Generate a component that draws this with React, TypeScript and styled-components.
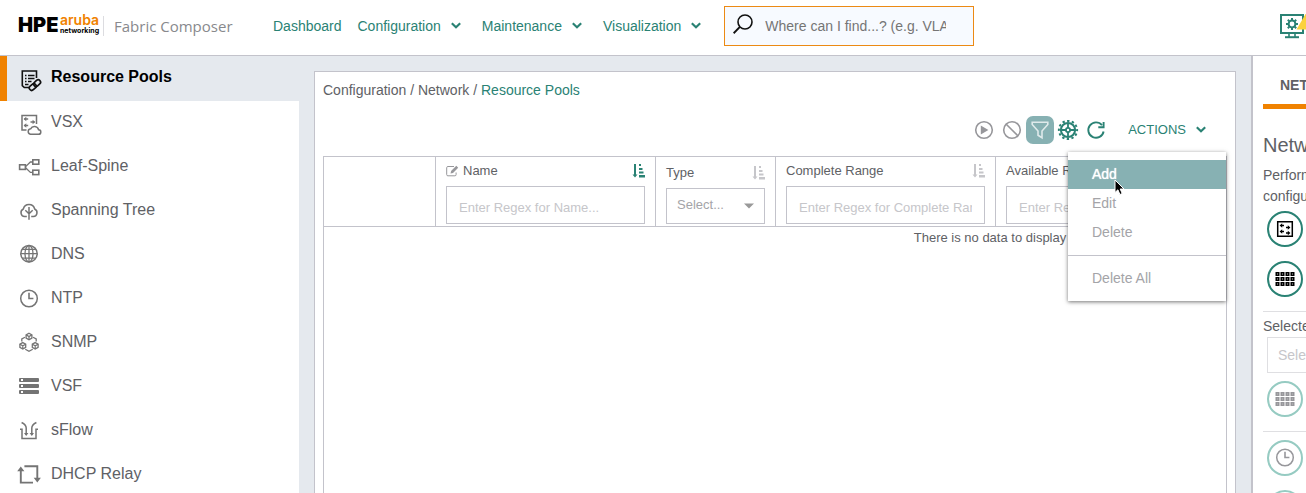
import React from "react";
import styled, { createGlobalStyle, css } from "styled-components";

const c = {
  teal: "#2a8274",
  tealFaded: "#96cbc2",
  sage: "#87b1b3",
  text: "#606165",
  muted: "#a4a4a8",
  faint: "#c6c6ca",
  line: "#c3c3cb",
  page: "#e5e9ee",
  orange: "#f08200",
};

const GlobalStyle = createGlobalStyle`
  *, *::before, *::after { box-sizing: border-box; }
  body {
    margin: 0;
    background: #fff;
    color: ${c.text};
    font-family: "Liberation Sans", Arial, sans-serif;
    font-size: 14px;
    line-height: 20px;
  }
  button, input, select { font: inherit; color: inherit; margin: 0; }
  svg { display: block; flex: none; }
`;

const Shell = styled.div`
  display: flex;
  flex-direction: column;
  height: 100vh;
  overflow: hidden;
`;

/* Header */

const TopBar = styled.header`
  display: flex;
  align-items: center;
  flex: none;
  height: 56px;
  padding: 0 0 4px 18px;
  border-bottom: 1px solid ${c.line};
  background: #fff;
  overflow: hidden;
`;

const Brand = styled.a`
  display: flex;
  align-items: center;
  width: 255px;
  flex: none;
  text-decoration: none;
`;

const BrandHpe = styled.span`
  width: 42px;
  padding-bottom: 2px;
  color: #000;
  font: 900 20px/20px Inter, sans-serif;
`;

const BrandStack = styled.span`
  display: flex;
  flex-direction: column;
  width: 43px;
  padding-bottom: 2px;
`;

const BrandAruba = styled.span`
  color: ${c.orange};
  font: 600 14px/12px Inter, sans-serif;
`;

const BrandNetworking = styled.span`
  color: #000;
  font: 700 7px/9px Inter, sans-serif;
`;

const BrandProduct = styled.span`
  padding-left: 10px;
  border-left: 1px solid #dcdce0;
  color: #88898d;
  font: 400 15px/20px "Open Sans", "Noto Sans", sans-serif;
  white-space: nowrap;
`;

const MainNav = styled.nav`
  display: flex;
  align-items: center;
  gap: 16px;
`;

const linkLook = css`
  border: 0;
  padding: 0;
  background: none;
  color: ${c.teal};
  text-decoration: none;
  cursor: pointer;
`;

const NavLink = styled.a`
  ${linkLook}
`;

const MenuButton = styled.button<{ $small?: boolean }>`
  ${linkLook}
  display: flex;
  align-items: center;
  gap: 9px;
  padding-right: 4px;
  font-size: ${(p) => (p.$small ? 13 : 14)}px;
`;

const Search = styled.label`
  display: flex;
  align-items: center;
  gap: 12px;
  width: 250px;
  height: 40px;
  margin-left: 18px;
  padding: 0 27px 0 8px;
  border: 1px solid #ec8a14;
  background: #f7faff;
`;

const SearchInput = styled.input`
  flex: 1;
  min-width: 0;
  border: 0;
  padding: 0;
  outline: 0;
  background: none;
  &::placeholder { color: #757575; opacity: 1; }
`;

const StatusButton = styled.button`
  ${linkLook}
  margin-left: auto;
  width: 27px;
  overflow: hidden;
`;

/* Page body */

const Body = styled.div`
  display: grid;
  grid-template-columns: 299px minmax(0, 1fr) 55px;
  flex: 1;
  min-height: 0;
`;

const SideNav = styled.nav`
  overflow: hidden;
  background: #fff;
`;

const SideLink = styled.a<{ $active?: boolean }>`
  display: flex;
  align-items: center;
  gap: 9px;
  height: ${(p) => (p.$active ? 45 : 44)}px;
  padding-left: ${(p) => (p.$active ? 9 : 16)}px;
  border-left: ${(p) => (p.$active ? `7px solid ${c.orange}` : "0")};
  background: ${(p) => (p.$active ? c.page : "#fff")};
  color: ${(p) => (p.$active ? "#000" : c.text)};
  font-size: 16px;
  font-weight: ${(p) => (p.$active ? 700 : 400)};
  text-decoration: none;

  svg { color: ${(p) => (p.$active ? "#111" : "#747474")}; }
`;

const SideLabel = styled.span`
  padding-bottom: 3px;
`;

const Content = styled.main`
  display: flex;
  padding: 15px 15px 0;
  background: ${c.page};
`;

const Panel = styled.section`
  display: flex;
  flex-direction: column;
  flex: 1;
  min-width: 0;
  padding: 8px 8px 0;
  border: 1px solid ${c.line};
  border-bottom: 0;
  background: #fff;
`;

const Crumbs = styled.div`
  color: ${c.text};
  white-space: pre;
`;

const CrumbLink = styled.a<{ $current?: boolean }>`
  color: ${(p) => (p.$current ? c.teal : "inherit")};
  text-decoration: none;
`;

const Toolbar = styled.div`
  display: flex;
  justify-content: flex-end;
  align-items: center;
  margin: 16px 0 12px;
  padding-right: 16px;
`;

const ToolButton = styled.button<{ $on?: boolean; $off?: boolean }>`
  display: flex;
  align-items: center;
  justify-content: center;
  width: 28px;
  height: 28px;
  padding: 0;
  border: 0;
  border-radius: 7px;
  background: ${(p) => (p.$on ? c.sage : "none")};
  color: ${(p) => (p.$on ? "#dfeaeb" : p.$off ? "#97979b" : c.teal)};
`;

const ActionsWrap = styled.div`
  position: relative;
  margin-left: 18px;
`;

const ActionMenu = styled.div`
  position: absolute;
  z-index: 2;
  top: 32px;
  right: -15px;
  width: 158px;
  padding: 8px 0;
  background: #fff;
  box-shadow: 0 1px 4px rgba(0, 0, 0, 0.55);
`;

const ActionItem = styled.button<{ $hover?: boolean }>`
  display: block;
  width: 100%;
  height: 29px;
  padding: 0 24px 2px;
  border: 0;
  background: ${(p) => (p.$hover ? c.sage : "none")};
  color: ${(p) => (p.$hover ? "#fff" : c.muted)};
  text-shadow: ${(p) => (p.$hover ? "0 0 1px #fff" : "none")};
  text-align: left;
`;

const ActionRule = styled.hr`
  margin: 8px 0;
  border: 0;
  border-top: 1px solid ${c.line};
`;

const Pointer = styled.svg`
  position: absolute;
  left: 46px;
  top: 27px;
`;

const TableFrame = styled.div`
  flex: 1;
  overflow: hidden;
  border: 1px solid ${c.line};
  border-bottom: 0;
`;

const Table = styled.table`
  width: 1332px;
  table-layout: fixed;
  border-collapse: separate;
  border-spacing: 0;
  font-size: 13px;
`;

const Head = styled.th<{ $w?: number }>`
  width: ${(p) => (p.$w ? `${p.$w}px` : "auto")};
  height: 70px;
  padding: 0 10px 2px;
  border-left: 1px solid ${c.line};
  border-bottom: 1px solid ${c.line};
  font-weight: 400;
  text-align: left;
  vertical-align: bottom;
  &:first-child { border-left: 0; }
`;

const HeadTitle = styled.div`
  display: flex;
  align-items: center;
  gap: 4px;
  margin-bottom: 5px;
  white-space: nowrap;
`;

const SortButton = styled.button<{ $on?: boolean }>`
  margin-left: auto;
  padding: 0;
  border: 0;
  background: none;
  color: ${(p) => (p.$on ? c.teal : c.faint)};
`;

const FilterInput = styled.input`
  display: block;
  width: 100%;
  height: 38px;
  padding: 4px 12px 0;
  border: 1px solid ${c.line};
  background: #fff;
  font-size: 13px;
  &::placeholder { color: ${c.faint}; opacity: 1; }
`;

const SelectBox = styled.div`
  display: grid;
  align-items: center;
  > * { grid-area: 1 / 1; }
  > svg { justify-self: end; margin-right: 11px; pointer-events: none; }
`;

const FilterSelect = styled.select`
  appearance: none;
  width: 100%;
  height: 36px;
  padding: 0 24px 2px 10px;
  border: 1px solid ${c.line};
  border-radius: 0;
  background: #fff;
  color: ${c.muted};
  font-size: 13px;
`;

const EmptyCell = styled.td`
  padding: 1px 0 0;
  text-align: center;
`;

/* Right side drawer */

const Drawer = styled.aside`
  overflow: hidden;
  padding-left: 10px;
  border-left: 2px solid ${c.line};
  background: #fff;
  white-space: nowrap;
`;

const DrawerTab = styled.button`
  display: block;
  width: 120px;
  padding: 19px 17px 9px;
  border: 0;
  border-bottom: 5px solid ${c.orange};
  background: none;
  font-weight: 700;
  text-align: left;
`;

const DrawerTitle = styled.h2`
  margin: 24px 0 8px;
  font-size: 20px;
  font-weight: 400;
  line-height: 24px;
`;

const DrawerText = styled.p`
  margin: 0 0 4px;
  line-height: 21px;
`;

const RoundStack = styled.div`
  display: flex;
  flex-direction: column;
  gap: 14px;
  padding: 0 0 14px 4px;
`;

const RoundButton = styled.button<{ $faded?: boolean }>`
  display: flex;
  align-items: center;
  justify-content: center;
  flex: none;
  width: 36px;
  height: 36px;
  padding: 0;
  border: 2px solid ${(p) => (p.$faded ? c.tealFaded : c.teal)};
  border-radius: 50%;
  background: #fff;
  color: ${(p) => (p.$faded ? "#97979b" : "#000")};
`;

const DrawerGroup = styled.div<{ $top: number }>`
  padding-top: ${(p) => p.$top}px;
  border-top: 1px solid #dfdfe2;
`;

const DrawerSelect = styled.select`
  appearance: none;
  display: block;
  width: 140px;
  height: 36px;
  margin: 1px 0 8px 4px;
  padding: 0 10px;
  border: 1px solid #dfdfe2;
  border-radius: 0;
  background: #fff;
  color: ${c.faint};
`;

/* Icons */

const Chevron = () => (
  <svg width="12" height="8" viewBox="0 0 12 8" fill="none" stroke="currentColor" strokeWidth="2.2">
    <path d="M1.8 1.3 6 5.2l4.2-3.9" />
  </svg>
);

const SideSvg = ({ children }: { children: React.ReactNode }) => (
  <svg width="26" height="26" viewBox="0 0 26 26" fill="none" stroke="currentColor" strokeWidth="1.3" aria-hidden="true">
    {children}
  </svg>
);

const ResourceIcon = () => (
  <SideSvg>
    <path d="M20.5 12V5H6.3v14.6l2 1.9H13" strokeWidth="1.6" />
    <path d="M9 9.5h1.500M9 12.500h1.500M9 15.500h1.500M12 9.500h6.500M12 12.500h6.500M12 15.500h3.500M9 18.500h3.500" strokeWidth="1.500" />
    <g transform="rotate(-42 19 19)" strokeWidth="1.700">
      <rect x="12.200" y="16.600" width="7.600" height="4.800" rx="2.400" />
      <rect x="18" y="16.600" width="7.600" height="4.800" rx="2.400" />
    </g>
  </SideSvg>
);

const VsxIcon = () => (
  <SideSvg>
    <path d="M20.500 14V5.600H6v14.500h4.500" strokeWidth="1.500" />
    <path d="M8.200 9h4M14.500 12h4M8.200 15.500h4" />
    <path d="m10.300 6.800-2.700 2.200 2.700 2.200zM16.600 9.800l2.700 2.200-2.700 2.200zM10.300 13.300l-2.700 2.200 2.700 2.200z" fill="currentColor" stroke="none" />
    <path d="M14.400 24.300h8a2.300 2.300 0 0 0 .2-4.600 4.300 4.300 0 0 0-8-.9 2.800 2.800 0 0 0-.2 5.500z" fill="#fff" strokeWidth="1.500" />
  </SideSvg>
);

const LeafIcon = () => (
  <SideSvg>
    <rect x="3.600" y="10.800" width="5.800" height="4.600" strokeWidth="1.600" />
    <rect x="16.800" y="5.800" width="6" height="4.400" strokeWidth="1.600" />
    <rect x="16.800" y="16.200" width="6" height="4.400" strokeWidth="1.600" />
    <path d="M16.800 8h-2.400L9.600 12.600M16.800 18.400h-2.400L9.600 13.800" />
  </SideSvg>
);

const TreeIcon = () => (
  <SideSvg>
    <path d="M10.800 18.600H8.600a4 4 0 0 1-1.300-7.600 5.900 5.900 0 0 1 11.400 0 4 4 0 0 1-1.300 7.600h-2.200" strokeWidth="1.500" />
    <path d="M13 9v12.800M9.300 12.200l3.700 3.600 3.700-3.600" strokeWidth="1.500" />
  </SideSvg>
);

const GlobeIcon = () => (
  <SideSvg>
    <circle cx="13" cy="11.700" r="8.200" strokeWidth="1.500" />
    <ellipse cx="13" cy="11.700" rx="4" ry="8.200" />
    <path d="M13 3.500v16.400M4.800 11.700h16.400M6 7.300h14M6 16.100h14" />
  </SideSvg>
);

const ClockIcon = () => (
  <SideSvg>
    <circle cx="13" cy="12.500" r="8.300" strokeWidth="1.500" />
    <path d="M13 6.800v5.700h4.400" strokeWidth="1.600" />
  </SideSvg>
);

const cube = (x: number, y: number) => (
  <g transform={`translate(${x} ${y})`} strokeWidth="1.300">
    <path d="M0-3.200 2.900-1.600v3.200L0 3.200l-2.900-1.600v-3.200z" />
    <path d="M-2.900-1.600 0 0l2.900-1.600M0 0v3.200" />
  </g>
);

const SnmpIcon = () => (
  <SideSvg>
    {cube(13, 6.5)}
    {cube(6.8, 15.8)}
    {cube(19.2, 15.8)}
    <path d="M9 7.200 5.800 9v2.400M17 7.200 20.200 9v2.400M9.300 19.200l3.700 2.100 3.700-2.100" />
  </SideSvg>
);

const VsfIcon = () => (
  <SideSvg>
    {[4, 10, 16].map((y) => (
      <g key={y} stroke="none">
        <rect x="3" y={y} width="20" height="4" rx="1" fill="currentColor" />
        <rect x="5" y={y + 1} width="2" height="2" fill="#fff" />
      </g>
    ))}
  </SideSvg>
);

const SflowIcon = () => (
  <SideSvg>
    <path d="M4 11.200h2v9.400h14v-9.400h2" strokeWidth="1.500" />
    <path d="M5.600 4.500c3.200 1.600 4.600 2.600 4.600 5.500v7M20.400 4.500c-3.200 1.600-4.600 2.600-4.600 5.500v7" strokeWidth="1.500" />
    <path d="M8 15h4.400l-2.200 3zM13.600 15H18l-2.200 3z" fill="currentColor" stroke="none" />
  </SideSvg>
);

const RelayIcon = () => (
  <SideSvg>
    <path d="M8.400 4.200h12.900v12M17 20.600H4.800v-12" strokeWidth="1.900" />
    <path d="M1.200 9.200 4.800 4.400l3.600 4.800zM17.700 15.800h7.200l-3.600 4.800z" fill="currentColor" stroke="none" />
  </SideSvg>
);

const SearchIcon = () => (
  <svg width="20" height="24" viewBox="0 0 20 24" fill="none" stroke="#111" strokeWidth="1.600" aria-hidden="true">
    <circle cx="12" cy="8" r="7" />
    <path d="M6.900 12.900.6 19.200" strokeWidth="2" />
  </svg>
);

const StatusIcon = () => (
  <svg width="40" height="34" viewBox="0 0 40 34" fill="none" stroke={c.teal} strokeWidth="2" aria-hidden="true">
    <path d="M2 6h22v18H2z" />
    <path d="M10 24v4M16 24v4" strokeWidth="1.600" />
    <path d="M6 28.200h14" />
    <circle cx="13" cy="15" r="3.400" />
    <path d="M13 9v2.600M13 18.400V21M7 15h2.600M16.400 15H19M8.800 10.800l1.800 1.800M15.400 17.400l1.800 1.800M17.200 10.800l-1.800 1.800M10.600 17.400l-1.800 1.800" />
    <path d="M28 2.500 17.500 20.500h21z" fill="#fbd23f" stroke="none" />
  </svg>
);

const PlayIcon = () => (
  <svg width="20" height="20" viewBox="0 0 20 20" fill="none" stroke="currentColor" aria-hidden="true">
    <circle cx="10" cy="10" r="8.300" strokeWidth="1.600" />
    <path d="M6.800 5.500v9l7.600-4.500z" fill="currentColor" stroke="none" />
  </svg>
);

const BanIcon = () => (
  <svg width="20" height="20" viewBox="0 0 20 20" fill="none" stroke="currentColor" strokeWidth="1.600" aria-hidden="true">
    <circle cx="10" cy="10" r="8.300" />
    <path d="m4 4 12 12" />
  </svg>
);

const FilterIcon = () => (
  <svg width="20" height="20" viewBox="0 0 20 20" fill="none" stroke="currentColor" strokeWidth="1.600" aria-hidden="true">
    <path d="M2.200 2.200h15.600v2.300L12 11v6.800l-4-2.500V11L2.200 4.500z" />
  </svg>
);

const WheelIcon = () => (
  <svg width="22" height="22" viewBox="0 0 22 22" fill="none" stroke="currentColor" aria-hidden="true">
    <circle cx="11" cy="11" r="7.100" strokeWidth="2" />
    <circle cx="11" cy="11" r="2.100" strokeWidth="1.800" />
    <path d="M11 4v5M11 13v5M4 11h5M13 11h5" strokeWidth="1.800" />
    <circle cx="11" cy="11" r="9.100" strokeWidth="2" strokeDasharray="2.382 2.382" strokeDashoffset="1.191" />
  </svg>
);

const RefreshIcon = () => (
  <svg width="20" height="20" viewBox="0 0 20 20" fill="none" stroke="currentColor" strokeWidth="1.900" aria-hidden="true">
    <path d="M17.600 11.500A7.700 7.700 0 1 1 16 5.200" />
    <path d="M17.600 2v5.300h-5.300" />
  </svg>
);

const EditIcon = () => (
  <svg width="13" height="12" viewBox="0 0 13 12" fill="none" stroke="#97979b" aria-hidden="true">
    <path d="M8 1.500H1.900A1.200 1.200 0 0 0 .7 2.700v6.900a1.200 1.200 0 0 0 1.200 1.200h7a1.200 1.200 0 0 0 1.200-1.200V7.500" />
    <path d="m4.500 8.500.6-2.500L10.300.8l1.900 1.900L7 7.900z" fill="#97979b" stroke="none" />
  </svg>
);

const SortIcon = () => (
  <svg width="13" height="14" viewBox="0 0 13 14" fill="currentColor" aria-hidden="true">
    <path d="M2 0h2v10.500h1.500L3 13.500.5 10.500H2zM7 0h2v2H7zM7 4h3.500v2H7zM7 7.500h4.500v2H7zM7 11h6v2.500H7z" />
  </svg>
);

const CaretIcon = () => (
  <svg width="10" height="6" viewBox="0 0 10 6" fill="#999" aria-hidden="true">
    <path d="M0 .5h10L5 5.500z" />
  </svg>
);

const SwitchIcon = () => (
  <svg width="18" height="18" viewBox="0 0 18 18" fill="none" stroke="currentColor" aria-hidden="true">
    <path d="M1.700 1.700h14.600v14.600H1.700z" strokeWidth="1.500" />
    <path d="M5 5.500h3M10 7.500h3M5 11.500h3M10 13h3" strokeWidth="1.400" />
    <path d="M6.200 3.300 3.600 5.500l2.600 2.200zM11.800 5.300l2.600 2.200-2.600 2.200zM6.200 9.300l-2.600 2.200 2.600 2.200zM11.800 10.800l2.600 2.200-2.600 2.200z" fill="currentColor" stroke="none" />
  </svg>
);

const GridIcon = () => (
  <svg width="20" height="16" viewBox="0 0 20 16" aria-hidden="true">
    {[1, 6, 11].map((y) =>
      [0, 5, 10, 15].map((x) => (
        <g key={`${x}-${y}`}>
          <rect x={x + 0.5} y={y} width="4" height="4" fill="currentColor" />
          <rect x={x + 2} y={y + 1.5} width="1" height="1" fill="#bbb" />
        </g>
      ))
    )}
  </svg>
);

const sideItems = [
  { label: "Resource Pools", icon: <ResourceIcon />, active: true },
  { label: "VSX", icon: <VsxIcon /> },
  { label: "Leaf-Spine", icon: <LeafIcon /> },
  { label: "Spanning Tree", icon: <TreeIcon /> },
  { label: "DNS", icon: <GlobeIcon /> },
  { label: "NTP", icon: <ClockIcon /> },
  { label: "SNMP", icon: <SnmpIcon /> },
  { label: "VSF", icon: <VsfIcon /> },
  { label: "sFlow", icon: <SflowIcon /> },
  { label: "DHCP Relay", icon: <RelayIcon /> },
];

const TextHead = ({ title, width, sorted, editable }: { title: string; width?: number; sorted?: boolean; editable?: boolean }) => (
  <Head $w={width} scope="col">
    <HeadTitle>
      {editable && <EditIcon />}
      <span>{title}</span>
      <SortButton $on={sorted} aria-label={`Sort by ${title}`}>
        <SortIcon />
      </SortButton>
    </HeadTitle>
    <FilterInput aria-label={title} placeholder={`Enter Regex for ${title}...`} />
  </Head>
);

export default function App() {
  return (
    <Shell>
      <GlobalStyle />
      <TopBar>
        <Brand href="#">
          <BrandHpe>HPE</BrandHpe>
          <BrandStack>
            <BrandAruba>aruba</BrandAruba>
            <BrandNetworking>networking</BrandNetworking>
          </BrandStack>
          <BrandProduct>Fabric Composer</BrandProduct>
        </Brand>
        <MainNav>
          <NavLink href="#">Dashboard</NavLink>
          {["Configuration", "Maintenance", "Visualization"].map((name) => (
            <MenuButton key={name}>
              {name}
              <Chevron />
            </MenuButton>
          ))}
        </MainNav>
        <Search>
          <SearchIcon />
          <SearchInput aria-label="Search" placeholder="Where can I find...? (e.g. VLAN)" />
        </Search>
        <StatusButton aria-label="System status">
          <StatusIcon />
        </StatusButton>
      </TopBar>

      <Body>
        <SideNav>
          {sideItems.map((item) => (
            <SideLink key={item.label} href="#" $active={item.active}>
              {item.icon}
              <SideLabel>{item.label}</SideLabel>
            </SideLink>
          ))}
        </SideNav>

        <Content>
          <Panel>
            <Crumbs>
              <CrumbLink href="#">Configuration</CrumbLink> / <CrumbLink href="#">Network</CrumbLink> /{" "}
              <CrumbLink href="#" $current>
                Resource Pools
              </CrumbLink>
            </Crumbs>

            <Toolbar>
              <ToolButton $off aria-label="Run"><PlayIcon /></ToolButton>
              <ToolButton $off aria-label="Cancel"><BanIcon /></ToolButton>
              <ToolButton $on aria-label="Filter"><FilterIcon /></ToolButton>
              <ToolButton aria-label="Settings"><WheelIcon /></ToolButton>
              <ToolButton aria-label="Refresh"><RefreshIcon /></ToolButton>
              <ActionsWrap>
                <MenuButton $small>
                  ACTIONS
                  <Chevron />
                </MenuButton>
                <ActionMenu>
                  <ActionItem $hover>Add</ActionItem>
                  <ActionItem disabled>Edit</ActionItem>
                  <ActionItem disabled>Delete</ActionItem>
                  <ActionRule />
                  <ActionItem disabled>Delete All</ActionItem>
                  <Pointer width="12" height="17" viewBox="0 0 12 17" aria-hidden="true">
                    <path d="M1 1v12.500l2.900-2.700 2 4.700 2.300-1-2-4.500H10z" fill="#000" stroke="#fff" strokeWidth="1" />
                  </Pointer>
                </ActionMenu>
              </ActionsWrap>
            </Toolbar>

            <TableFrame>
              <Table>
                <thead>
                  <tr>
                    <Head $w={111} scope="col" aria-label="Selection" />
                    <TextHead title="Name" width={220} sorted editable />
                    <Head $w={120} scope="col">
                      <HeadTitle>
                        <span>Type</span>
                        <SortButton aria-label="Sort by Type">
                          <SortIcon />
                        </SortButton>
                      </HeadTitle>
                      <SelectBox>
                        <FilterSelect aria-label="Type">
                          <option>Select...</option>
                        </FilterSelect>
                        <CaretIcon />
                      </SelectBox>
                    </Head>
                    <TextHead title="Complete Range" width={220} />
                    <TextHead title="Available Range" />
                  </tr>
                </thead>
                <tbody>
                  <tr>
                    <EmptyCell colSpan={5}>There is no data to display</EmptyCell>
                  </tr>
                </tbody>
              </Table>
            </TableFrame>
          </Panel>
        </Content>

        <Drawer>
          <DrawerTab>NETWORK</DrawerTab>
          <DrawerTitle>Network</DrawerTitle>
          <DrawerText>
            Perform
            <br />
            configuration
          </DrawerText>
          <RoundStack>
            <RoundButton aria-label="Switches"><SwitchIcon /></RoundButton>
            <RoundButton aria-label="Ports"><GridIcon /></RoundButton>
          </RoundStack>
          <DrawerGroup $top={4}>
            <label htmlFor="selected">Selected</label>
            <DrawerSelect id="selected">
              <option>Select...</option>
            </DrawerSelect>
            <RoundStack>
              <RoundButton $faded aria-label="Selected ports"><GridIcon /></RoundButton>
            </RoundStack>
          </DrawerGroup>
          <DrawerGroup $top={8}>
            <RoundStack>
              <RoundButton $faded aria-label="NTP"><ClockIcon /></RoundButton>
              <RoundButton $faded aria-label="DNS"><GlobeIcon /></RoundButton>
            </RoundStack>
          </DrawerGroup>
        </Drawer>
      </Body>
    </Shell>
  );
}
